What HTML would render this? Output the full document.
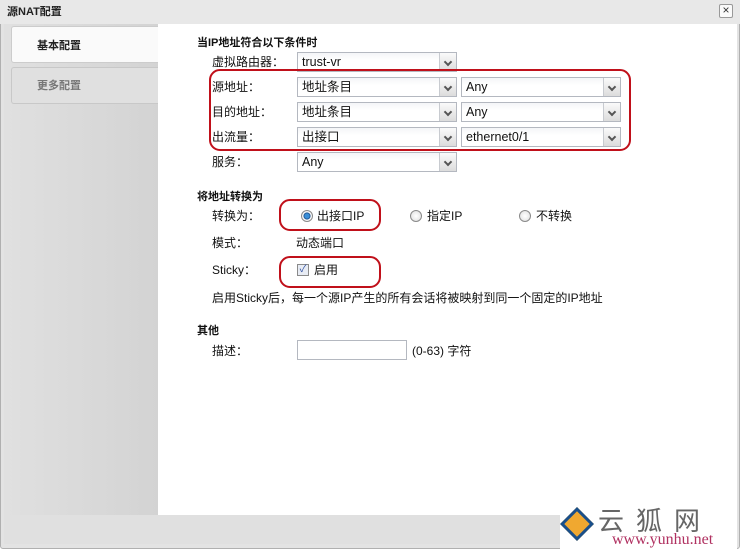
<!DOCTYPE html>
<html><head><meta charset="utf-8"><style>
*{margin:0;padding:0;box-sizing:border-box}
body{width:740px;height:549px;overflow:hidden;background:#fff;font-family:"Liberation Sans","Noto Sans CJK SC",sans-serif;font-size:12px;line-height:14px;color:#111;position:relative}
.a{position:absolute}
.sel{position:absolute;height:20px;border:1px solid #b4b8c0;background:linear-gradient(#f4f5f7,#fff 40%);font-size:12.5px;line-height:19px;padding-left:4px}
.sel b{position:absolute;right:0;top:0;width:17px;height:18px;border-left:1px solid #c8cbd0;background:linear-gradient(#fafafa,#dcdcdc)}
.sel b:after{content:"";position:absolute;left:5px;top:6px;width:4px;height:4px;border-right:2px solid #555;border-bottom:2px solid #555;transform:rotate(45deg)}
.lbl{position:absolute;font-size:12px}
.h{position:absolute;font-weight:bold;font-size:11px}
.red{position:absolute;border:2px solid #c0101a;border-radius:11px}
.rad{position:absolute;width:12px;height:12px;border-radius:50%;border:1px solid #8a8a8a;background:radial-gradient(#fff,#ddd)}
</style></head><body>
<div class="a" style="left:0;top:0;width:740px;height:549px;background:#e3e3e3;border:1px solid #b0b0b0;border-radius:3px"></div>
<div class="a" style="left:0;top:0;width:740px;height:24px;background:#e8e8e8"></div>
<div class="a" style="left:7px;top:5px;font-size:11px;font-weight:bold;color:#222">源NAT配置</div>
<div class="a" style="left:719px;top:4px;width:14px;height:14px;border:1px solid #999;border-radius:2px;background:#fafafa;font-size:12px;line-height:11px;text-align:center;color:#333">×</div>
<div class="a" style="left:4px;top:24px;width:154px;height:491px;background:linear-gradient(90deg,#e0e0e0,#d3d3d3)"></div>
<div class="a" style="left:158px;top:24px;width:579px;height:491px;background:#fff"></div>
<div class="a" style="left:4px;top:515px;width:733px;height:29px;background:#e0e0e0"></div>
<div class="a" style="left:11px;top:26px;width:147px;height:37px;background:#fafafa;border:1px solid #ccc;border-right:none;border-radius:3px 0 0 3px"></div>
<div class="a" style="left:37px;top:39px;font-size:11px;font-weight:bold;color:#222">基本配置</div>
<div class="a" style="left:11px;top:67px;width:147px;height:37px;background:#e0e0e0;border:1px solid #c8c8c8;border-right:none;border-radius:3px 0 0 3px"></div>
<div class="a" style="left:37px;top:79px;font-size:11px;font-weight:bold;color:#777">更多配置</div>

<div class="h" style="left:197px;top:36px">当IP地址符合以下条件时</div>
<div class="lbl" style="left:212px;top:55px">虚拟路由器：</div>
<div class="lbl" style="left:212px;top:80px">源地址：</div>
<div class="lbl" style="left:212px;top:105px">目的地址：</div>
<div class="lbl" style="left:212px;top:130px">出流量：</div>
<div class="lbl" style="left:212px;top:155px">服务：</div>
<div class="sel" style="left:297px;top:52px;width:160px">trust-vr<b></b></div>
<div class="sel" style="left:297px;top:77px;width:160px">地址条目<b></b></div>
<div class="sel" style="left:297px;top:102px;width:160px">地址条目<b></b></div>
<div class="sel" style="left:297px;top:127px;width:160px">出接口<b></b></div>
<div class="sel" style="left:297px;top:152px;width:160px">Any<b></b></div>
<div class="sel" style="left:461px;top:77px;width:160px">Any<b></b></div>
<div class="sel" style="left:461px;top:102px;width:160px">Any<b></b></div>
<div class="sel" style="left:461px;top:127px;width:160px">ethernet0/1<b></b></div>
<div class="red" style="left:209px;top:69px;width:422px;height:82px"></div>

<div class="h" style="left:197px;top:190px">将地址转换为</div>
<div class="lbl" style="left:212px;top:209px">转换为：</div>
<div class="red" style="left:279px;top:199px;width:102px;height:32px"></div>
<div class="rad" style="left:301px;top:210px;background:radial-gradient(#3a8fd8 30%,#1a4f8a 45%,#fff 55%,#ddd)"></div>
<div class="lbl" style="left:317px;top:209px">出接口IP</div>
<div class="rad" style="left:410px;top:210px"></div>
<div class="lbl" style="left:427px;top:209px">指定IP</div>
<div class="rad" style="left:519px;top:210px"></div>
<div class="lbl" style="left:536px;top:209px">不转换</div>
<div class="lbl" style="left:212px;top:236px">模式：</div>
<div class="lbl" style="left:296px;top:236px">动态端口</div>
<div class="lbl" style="left:212px;top:263px">Sticky：</div>
<div class="red" style="left:279px;top:256px;width:102px;height:32px"></div>
<div class="a" style="left:297px;top:264px;width:12px;height:12px;border:1px solid #8a8a8a;background:#e8ecf4;color:#3050a0;font-size:10px;line-height:10px;text-align:center">✓</div>
<div class="lbl" style="left:314px;top:263px">启用</div>
<div class="lbl" style="left:212px;top:291px">启用Sticky后，每一个源IP产生的所有会话将被映射到同一个固定的IP地址</div>

<div class="h" style="left:197px;top:324px">其他</div>
<div class="lbl" style="left:212px;top:344px">描述：</div>
<div class="a" style="left:297px;top:340px;width:110px;height:20px;border:1px solid #b4b8c0;background:#fff"></div>
<div class="lbl" style="left:412px;top:344px">(0-63) 字符</div>

<div class="a" style="left:560px;top:503px;width:177px;height:46px;background:#fff"></div>
<div class="a" style="left:565px;top:512px;width:24px;height:24px;transform:rotate(45deg);border:3px solid #1a4f8a;background:#f0a830"></div>
<div class="a" style="left:598px;top:505px;font-size:26px;color:#666;letter-spacing:12px;font-family:'Noto Sans CJK SC',sans-serif;line-height:30px">云狐网</div>
<div class="a" style="left:612px;top:531px;font-size:16px;color:#b03060;font-family:'Liberation Serif',serif;line-height:18px">www.yunhu.net</div>
</body></html>
